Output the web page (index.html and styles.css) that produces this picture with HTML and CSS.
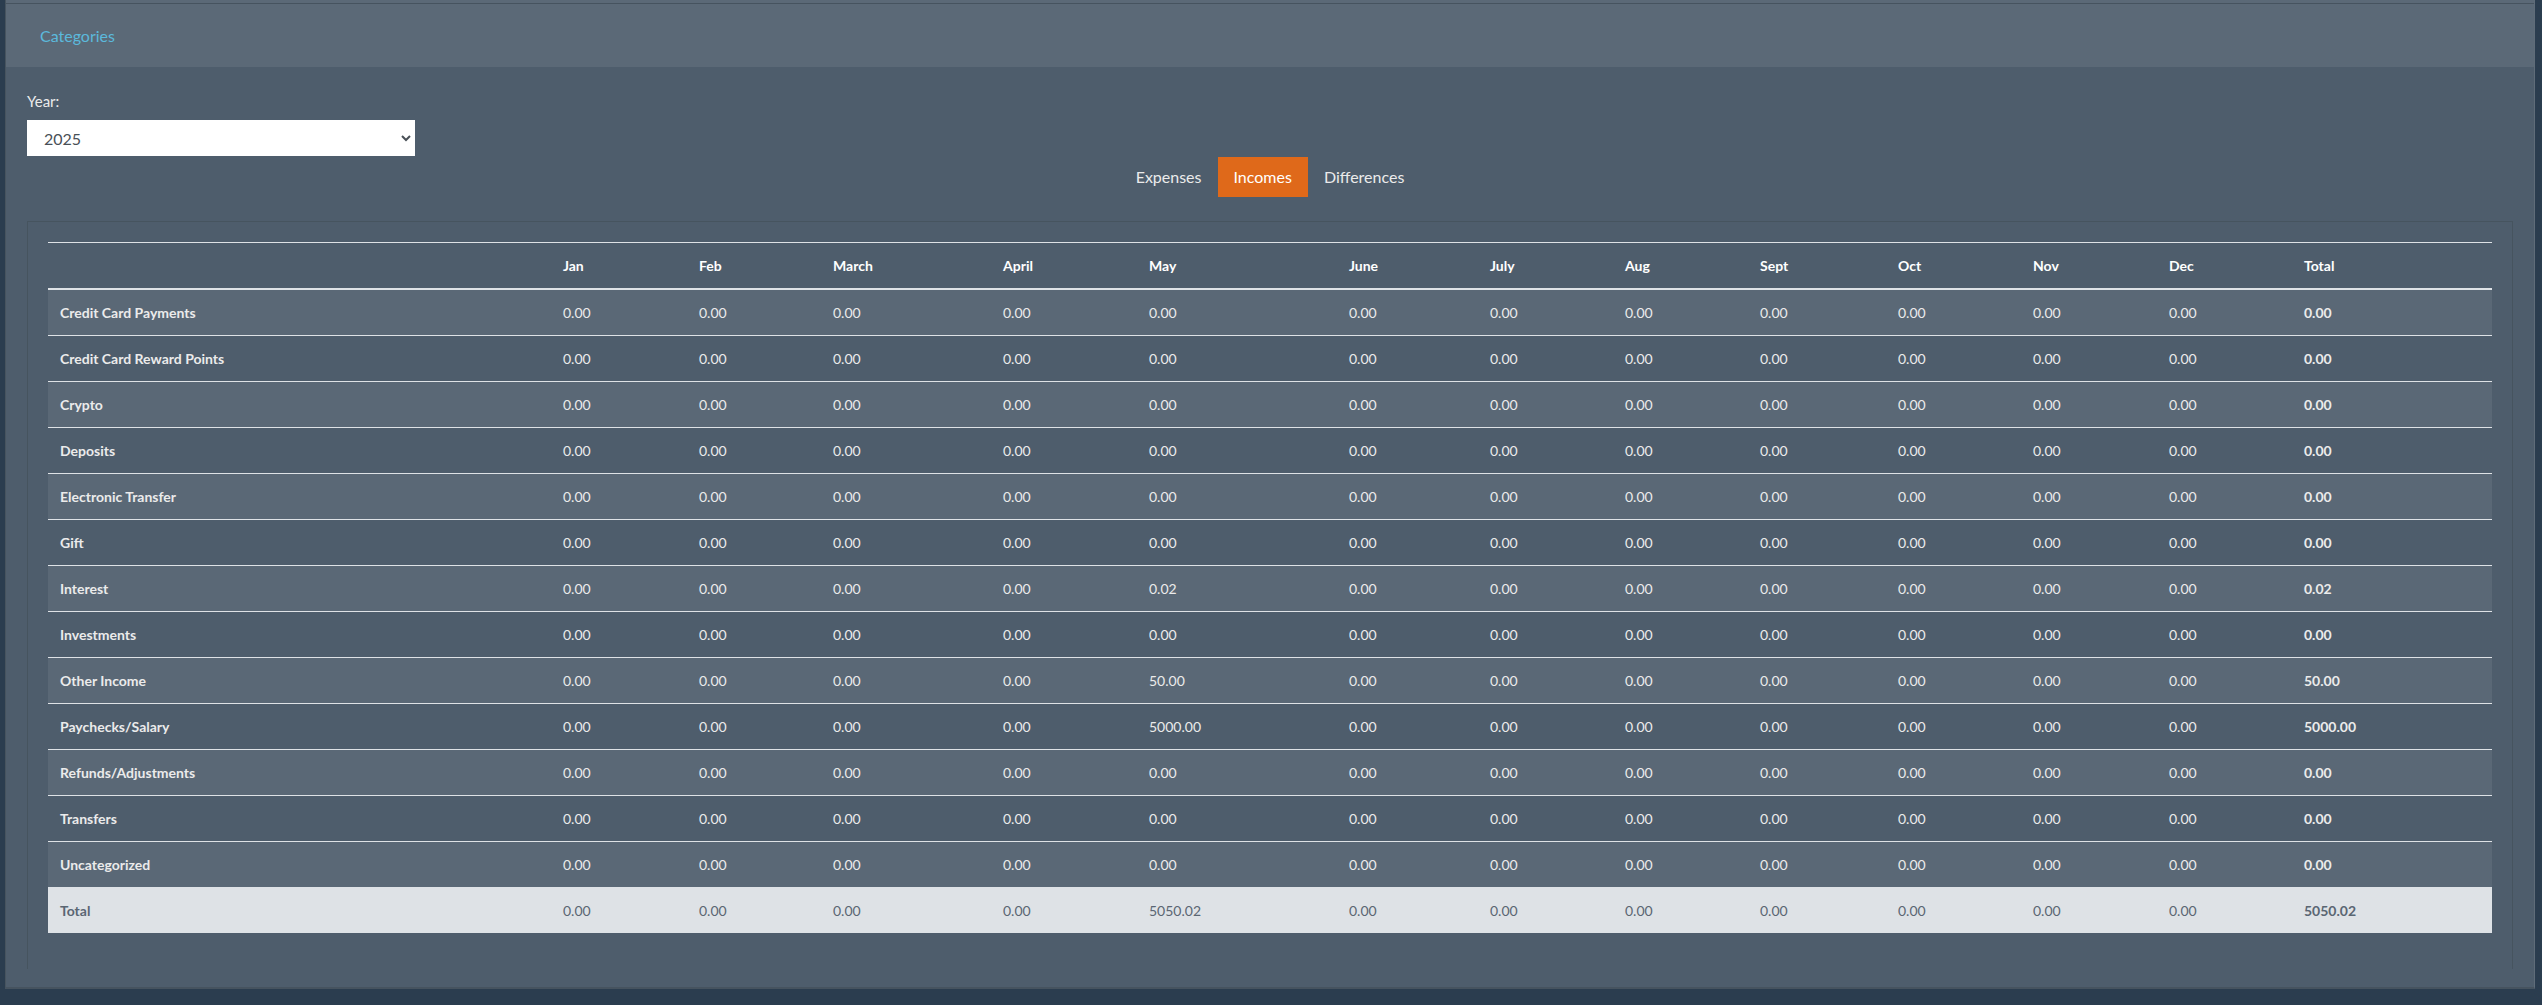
FILE: index.html
```html
<!DOCTYPE html>
<html>
<head>
<meta charset="utf-8">
<title>Categories</title>
<link rel="stylesheet" href="styles.css">
</head>
<body>
<div class="page">
  <div class="card">
    <div class="card-top"></div>
    <div class="card-header"><a class="header-link" href="#">Categories</a></div>
    <div class="card-body">
      <label class="year-label" for="year">Year:</label>
      <select id="year" class="year-select">
        <option>2025</option>
        <option>2024</option>
      </select>
      <div class="tabs">
        <a class="tab" href="#">Expenses</a>
        <a class="tab active" href="#">Incomes</a>
        <a class="tab" href="#">Differences</a>
      </div>
      <div class="panel">
        <table class="report">
          <colgroup>
            <col class="c-name">
            <col class="c-jan">
            <col class="c-feb">
            <col class="c-mar">
            <col class="c-apr">
            <col class="c-may">
            <col class="c-jun">
            <col class="c-jul">
            <col class="c-aug">
            <col class="c-sep">
            <col class="c-oct">
            <col class="c-nov">
            <col class="c-dec">
            <col class="c-total">
          </colgroup>
          <thead>
            <tr><th></th><th>Jan</th><th>Feb</th><th>March</th><th>April</th><th>May</th><th>June</th><th>July</th><th>Aug</th><th>Sept</th><th>Oct</th><th>Nov</th><th>Dec</th><th>Total</th></tr>
          </thead>
          <tbody>
            <tr class="odd"><th>Credit Card Payments</th><td>0.00</td><td>0.00</td><td>0.00</td><td>0.00</td><td>0.00</td><td>0.00</td><td>0.00</td><td>0.00</td><td>0.00</td><td>0.00</td><td>0.00</td><td>0.00</td><th>0.00</th></tr>
            <tr><th>Credit Card Reward Points</th><td>0.00</td><td>0.00</td><td>0.00</td><td>0.00</td><td>0.00</td><td>0.00</td><td>0.00</td><td>0.00</td><td>0.00</td><td>0.00</td><td>0.00</td><td>0.00</td><th>0.00</th></tr>
            <tr class="odd"><th>Crypto</th><td>0.00</td><td>0.00</td><td>0.00</td><td>0.00</td><td>0.00</td><td>0.00</td><td>0.00</td><td>0.00</td><td>0.00</td><td>0.00</td><td>0.00</td><td>0.00</td><th>0.00</th></tr>
            <tr><th>Deposits</th><td>0.00</td><td>0.00</td><td>0.00</td><td>0.00</td><td>0.00</td><td>0.00</td><td>0.00</td><td>0.00</td><td>0.00</td><td>0.00</td><td>0.00</td><td>0.00</td><th>0.00</th></tr>
            <tr class="odd"><th>Electronic Transfer</th><td>0.00</td><td>0.00</td><td>0.00</td><td>0.00</td><td>0.00</td><td>0.00</td><td>0.00</td><td>0.00</td><td>0.00</td><td>0.00</td><td>0.00</td><td>0.00</td><th>0.00</th></tr>
            <tr><th>Gift</th><td>0.00</td><td>0.00</td><td>0.00</td><td>0.00</td><td>0.00</td><td>0.00</td><td>0.00</td><td>0.00</td><td>0.00</td><td>0.00</td><td>0.00</td><td>0.00</td><th>0.00</th></tr>
            <tr class="odd"><th>Interest</th><td>0.00</td><td>0.00</td><td>0.00</td><td>0.00</td><td>0.02</td><td>0.00</td><td>0.00</td><td>0.00</td><td>0.00</td><td>0.00</td><td>0.00</td><td>0.00</td><th>0.02</th></tr>
            <tr><th>Investments</th><td>0.00</td><td>0.00</td><td>0.00</td><td>0.00</td><td>0.00</td><td>0.00</td><td>0.00</td><td>0.00</td><td>0.00</td><td>0.00</td><td>0.00</td><td>0.00</td><th>0.00</th></tr>
            <tr class="odd"><th>Other Income</th><td>0.00</td><td>0.00</td><td>0.00</td><td>0.00</td><td>50.00</td><td>0.00</td><td>0.00</td><td>0.00</td><td>0.00</td><td>0.00</td><td>0.00</td><td>0.00</td><th>50.00</th></tr>
            <tr><th>Paychecks/Salary</th><td>0.00</td><td>0.00</td><td>0.00</td><td>0.00</td><td>5000.00</td><td>0.00</td><td>0.00</td><td>0.00</td><td>0.00</td><td>0.00</td><td>0.00</td><td>0.00</td><th>5000.00</th></tr>
            <tr class="odd"><th>Refunds/Adjustments</th><td>0.00</td><td>0.00</td><td>0.00</td><td>0.00</td><td>0.00</td><td>0.00</td><td>0.00</td><td>0.00</td><td>0.00</td><td>0.00</td><td>0.00</td><td>0.00</td><th>0.00</th></tr>
            <tr><th>Transfers</th><td>0.00</td><td>0.00</td><td>0.00</td><td>0.00</td><td>0.00</td><td>0.00</td><td>0.00</td><td>0.00</td><td>0.00</td><td>0.00</td><td>0.00</td><td>0.00</td><th>0.00</th></tr>
            <tr class="odd"><th>Uncategorized</th><td>0.00</td><td>0.00</td><td>0.00</td><td>0.00</td><td>0.00</td><td>0.00</td><td>0.00</td><td>0.00</td><td>0.00</td><td>0.00</td><td>0.00</td><td>0.00</td><th>0.00</th></tr>
            <tr class="total"><th>Total</th><td>0.00</td><td>0.00</td><td>0.00</td><td>0.00</td><td>5050.02</td><td>0.00</td><td>0.00</td><td>0.00</td><td>0.00</td><td>0.00</td><td>0.00</td><td>0.00</td><th>5050.02</th></tr>
          </tbody>
        </table>
      </div>
    </div>
  </div>
</div>
</body>
</html>
```

FILE: styles.css
```css
html, body {
  margin: 0;
  padding: 0;
}

body {
  background: #2b3d4f;
  font-family: Lato, "Open Sans", sans-serif;
  font-size: 16px;
  line-height: 24px;
  color: #ebebeb;
}

.page {
  padding: 0 7px 16px 5px;
}

.card {
  background: #4e5d6c;
  border-left: 1px solid #47545f;
  border-right: 1px solid #5f6c79;
  border-bottom: 2px solid #46535f;
}

.card-top {
  height: 3px;
  background: #5b6977;
  border-bottom: 1px solid #46535f;
}

.card-header {
  background: #5b6977;
  padding: 20px 34px 19px;
}

.header-link {
  color: #5bb9dc;
  text-decoration: none;
}

.card-body {
  padding: 24px 21px 18px 21px;
}

.year-label {
  display: block;
  margin-bottom: 8px;
  font-size: 15px;
  line-height: 21px;
  color: #ebebeb;
}

.year-select {
  display: block;
  width: 388px;
  height: 36px;
  margin: 0;
  padding: 0 12px 0 12px;
  background: #ffffff;
  border: 1px solid #ffffff;
  border-radius: 0;
  color: #495057;
  font-family: Lato, "Open Sans", sans-serif;
  font-size: 16px;
}

.tabs {
  display: flex;
  justify-content: center;
  margin-top: 1px;
}

.tab {
  display: block;
  padding: 8px 16px;
  line-height: 24px;
  color: #ebebeb;
  text-decoration: none;
}

.tab.active {
  background: #df691a;
  color: #ffffff;
}

.panel {
  margin-top: 24px;
  border: 1px solid #46545f;
  border-bottom: none;
  padding: 20px;
}

.report {
  width: 100%;
  table-layout: fixed;
  border-collapse: collapse;
  margin-bottom: 16px;
  font-size: 14px;
  line-height: 21px;
}

.c-name { width: 503px; }
.c-jan { width: 136px; }
.c-feb { width: 134px; }
.c-mar { width: 170px; }
.c-apr { width: 146px; }
.c-may { width: 200px; }
.c-jun { width: 141px; }
.c-jul { width: 135px; }
.c-aug { width: 135px; }
.c-sep { width: 138px; }
.c-oct { width: 135px; }
.c-nov { width: 136px; }
.c-dec { width: 135px; }
.c-total { width: 200px; }

.report th,
.report td {
  padding: 12px;
  text-align: left;
  vertical-align: top;
  border-top: 1px solid #dee2e6;
  white-space: nowrap;
}

.report th {
  font-weight: 700;
}

.report td {
  font-weight: 400;
}

.report thead th {
  border-bottom: 2px solid #dee2e6;
  color: #ffffff;
}

.report tbody tr.odd {
  background: #5a6876;
}

.report tbody tr.total {
  background: #dee2e6;
  color: #5a6673;
}
```
